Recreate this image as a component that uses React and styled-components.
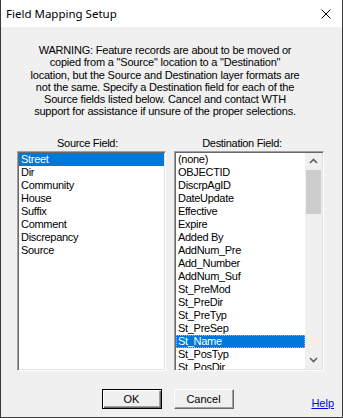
import styled, { createGlobalStyle } from "styled-components";

const GlobalStyle = createGlobalStyle`
  html, body {
    margin: 0;
    padding: 0;
    background: #f0f0f0;
  }
  * {
    box-sizing: border-box;
  }
`;

const sourceFields = ["Street", "Dir", "Community", "House", "Suffix", "Comment", "Discrepancy", "Source"];

const destFields = [
    "(none)", "OBJECTID", "DiscrpAgID", "DateUpdate", "Effective", "Expire", "Added By",
    "AddNum_Pre", "Add_Number", "AddNum_Suf", "St_PreMod", "St_PreDir", "St_PreTyp",
    "St_PreSep", "St_Name", "St_PosTyp", "St_PosDir",
];

const warningLines = [
    "WARNING: Feature records are about to be moved or",
    "copied from a \"Source\" location to a \"Destination\"",
    "location, but the Source and Destination layer formats are",
    "not the same. Specify a Destination field for each of the",
    "Source fields listed below. Cancel and contact WTH",
    "support for assistance if unsure of the proper selections.",
];

const App = () => {
    return (
        <>
            <GlobalStyle />
            <Window>
                <TitleBar>
                    <Title>Field Mapping Setup</Title>
                    <CloseIcon width="10" height="10" viewBox="0 0 10 10">
                        <path d="M0.5 0.5 L9.5 9.5 M9.5 0.5 L0.5 9.5" stroke="#000" strokeWidth="1" fill="none" />
                    </CloseIcon>
                </TitleBar>

                <Body>
                    <Warning>
                        {warningLines.map((line, i) => (
                            <div key={i}>{line}</div>
                        ))}
                    </Warning>

                    <Columns>
                        <Column width={149}>
                            <Label shift={-4}>Source Field:</Label>
                            <ListBox>
                                <Items>
                                    {sourceFields.map((f) => (
                                        <Item key={f} selected={f === "Street"}>{f}</Item>
                                    ))}
                                </Items>
                            </ListBox>
                        </Column>

                        <Column width={150}>
                            <Label shift={-7}>Destination Field:</Label>
                            <ListBox>
                                <Items>
                                    {destFields.map((f) => (
                                        <Item key={f} selected={f === "St_Name"} focused={f === "St_Name"}>{f}</Item>
                                    ))}
                                </Items>
                                <ScrollBar>
                                    <ArrowButton>
                                        <svg width="9" height="6" viewBox="0 0 9 6">
                                            <path d="M1 5 L4.5 1.5 L8 5" stroke="#606060" strokeWidth="1.6" fill="none" />
                                        </svg>
                                    </ArrowButton>
                                    <Thumb />
                                    <Track />
                                    <ArrowButton>
                                        <svg width="9" height="6" viewBox="0 0 9 6">
                                            <path d="M1 1 L4.5 4.5 L8 1" stroke="#606060" strokeWidth="1.6" fill="none" />
                                        </svg>
                                    </ArrowButton>
                                </ScrollBar>
                            </ListBox>
                        </Column>
                    </Columns>

                    <Footer>
                        <span />
                        <Buttons>
                            <Button isDefault>OK</Button>
                            <Button>Cancel</Button>
                        </Buttons>
                        <HelpLink href="#">Help</HelpLink>
                    </Footer>
                </Body>
            </Window>
        </>
    );
};

export default App;

const Window = styled.div`
    width: 343px;
    height: 418px;
    display: flex;
    flex-direction: column;
    border-left: 1px solid #3a3a3a;
    border-right: 1px solid #3a3a3a;
    border-bottom: 1px solid #3a3a3a;
    background: #f0f0f0;
    font-family: "Liberation Sans", Arial, sans-serif;
    font-size: 11px;
    color: #000;
`;

const TitleBar = styled.div`
    height: 27px;
    background: #fff;
    display: flex;
    align-items: center;
    justify-content: space-between;
    padding: 0 11px 0 5px;
`;

const Title = styled.div`
    font-family: "Noto Sans", "Open Sans", sans-serif;
    font-size: 11.5px;
    color: #000;
`;

const CloseIcon = styled.svg`
    display: block;
`;

const Body = styled.div`
    flex: 1;
    display: flex;
    flex-direction: column;
`;

const Warning = styled.div`
    margin-top: 17px;
    margin-left: 19px;
    width: 290px;
    text-align: center;
    line-height: 12.3px;
    letter-spacing: -0.2px;
`;

const Columns = styled.div`
    display: flex;
    gap: 8px;
    padding-left: 16px;
    margin-top: 19px;
`;

const Column = styled.div`
    width: ${(props) => props.width}px;
    display: flex;
    flex-direction: column;
`;

const Label = styled.div`
    text-align: center;
    line-height: 13px;
    height: 14px;
    letter-spacing: -0.3px;
    transform: translateX(${(props) => props.shift}px);
`;

const ListBox = styled.div`
    height: 220px;
    display: flex;
    background: #fff;
    border-top: 1px solid #a0a0a0;
    border-left: 1px solid #a0a0a0;
    border-right: 1px solid #fff;
    border-bottom: 1px solid #fff;
    box-shadow: inset 1px 1px 0 #696969, inset -1px -1px 0 #e3e3e3;
    padding: 1px;
    overflow: hidden;
`;

const Items = styled.div`
    flex: 1;
    min-width: 0;
    display: flex;
    flex-direction: column;
`;

const Item = styled.div`
    flex: none;
    height: 13px;
    line-height: 13px;
    padding-left: 2px;
    white-space: nowrap;
    letter-spacing: -0.3px;
    background-color: ${(props) => props.selected ? "#0078d7" : "transparent"};
    color: ${(props) => props.selected ? "#fff" : "#000"};
    outline: ${(props) => props.focused ? "1px dotted #f5a623" : "none"};
    outline-offset: -1px;
`;

const ScrollBar = styled.div`
    width: 17px;
    flex: none;
    display: flex;
    flex-direction: column;
    background: #f0f0f0;
`;

const ArrowButton = styled.div`
    height: 17px;
    flex: none;
    display: flex;
    align-items: center;
    justify-content: center;
`;

const Thumb = styled.div`
    height: 44px;
    margin: 0 1px;
    background: #cdcdcd;
`;

const Track = styled.div`
    flex: 1;
`;

const Footer = styled.div`
    margin-top: 18px;
    display: grid;
    grid-template-columns: 1fr auto 1fr;
    padding-right: 8px;
`;

const Buttons = styled.div`
    display: flex;
    gap: 12px;
`;

const Button = styled.button`
    width: 60px;
    height: 20px;
    padding: 0;
    font-family: "Liberation Sans", Arial, sans-serif;
    font-size: 11px;
    color: #000;
    background: #f0f0f0;
    border: 1px solid;
    border-color: ${(props) => props.isDefault ? "#000" : "#fff #696969 #696969 #fff"};
    box-shadow: ${(props) => props.isDefault
        ? "inset 1px 1px 0 #fff, inset -1px -1px 0 #696969, inset -2px -2px 0 #a0a0a0"
        : "inset -1px -1px 0 #a0a0a0"};
`;

const HelpLink = styled.a`
    justify-self: end;
    align-self: end;
    color: #0000ff;
    text-decoration: underline;
    line-height: 13px;
    margin-bottom: -1px;
`;
